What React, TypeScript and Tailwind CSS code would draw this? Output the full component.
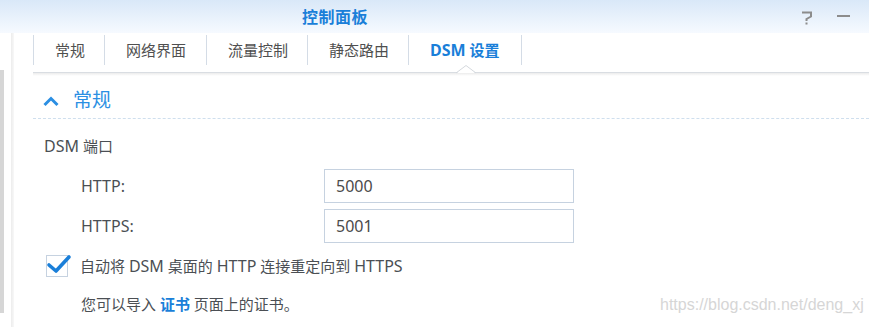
import React from "react";

const tabs = [
  { label: "常规", w: "w-[71px]" },
  { label: "网络界面", w: "w-[102px]" },
  { label: "流量控制", w: "w-[101px]" },
  { label: "静态路由", w: "w-[101px]" },
];

function L({ children }: { children: React.ReactNode }) {
  return <span className="text-[16px]">{children}</span>;
}

export default function App() {
  return (
    <div
      className="relative w-[869px] h-[327px] overflow-hidden bg-white text-[#4b4f54]"
      style={{ fontFamily: '"Noto Sans", "Noto Sans CJK SC", sans-serif' }}
    >
      {/* Header */}
      <div className="h-[33px] flex items-center bg-gradient-to-b from-[#d9e8f8] to-[#f6faff]">
        <div className="ml-[302px] text-[16px] font-semibold text-[#1a7fd9] leading-none tracking-[0.5px]">
          控制面板
        </div>
        <div className="ml-auto mr-[19px] flex items-center gap-[24px]">
          <svg width="12" height="14" viewBox="0 0 12 14" className="mt-[2px]">
            <path d="M1 1.5 H10 V5.5 L5.5 8 V10" fill="none" stroke="#8c8c8c" strokeWidth="2" />
            <rect x="4.5" y="11.5" width="2" height="2" fill="#8c8c8c" />
          </svg>
          <div className="w-[13px] h-[2px] bg-[#8c8c8c] mt-[-1px]" />
        </div>
      </div>

      <div className="flex h-[294px]">
        {/* Left strip */}
        <div className="w-[33px] flex shrink-0">
          <div className="w-[4px] pt-[37px]">
            <div className="h-[243px] bg-[#d6d6d6]" />
          </div>
          <div className="w-[7px]" />
          <div className="w-[3px] h-full bg-gradient-to-r from-[#ececec] to-[#f8f8f8]" />
        </div>

        {/* Main */}
        <div className="flex-1 flex flex-col">
          {/* Tabs */}
          <div className="relative h-[39px]">
            <div className="mt-[2px] h-[30px] flex items-stretch">
              {tabs.map((t) => (
                <div
                  key={t.label}
                  className={`${t.w} border-l border-[#d4dce6] pl-[21px] flex items-center text-[15px] text-[#4f4f4f]`}
                >
                  {t.label}
                </div>
              ))}
              <div className="w-[114px] border-l border-r border-[#d4dce6] pl-[21px] flex items-center text-[15px] font-bold text-[#1a7fd9]">
                <span className="text-[16px]">DSM</span>&nbsp;设置
              </div>
            </div>
            <div className="absolute left-0 right-0 bottom-[-1px] h-[1px] bg-[#d9dde2]" />
            <div className="absolute left-0 right-0 bottom-[-4px] h-[3px] bg-gradient-to-b from-[#ececec] to-white" />
            <svg
              width="20"
              height="10"
              viewBox="0 0 20 10"
              className="absolute left-[423px] bottom-[-2px]"
            >
              <polygon points="1,9 10,2 19,9" fill="white" />
              <polyline points="0,9 10,1.5 20,9" fill="none" stroke="#d4d8dd" strokeWidth="1" />
            </svg>
          </div>

          {/* Section header */}
          <div className="mt-[13px] h-[34px] flex items-center border-b border-dashed border-[#cfdfee]">
            <svg width="18" height="12" viewBox="0 0 18 12" className="ml-[9px] mt-[-2px]">
              <polyline points="2.5,10 9,3.5 15.5,10" fill="none" stroke="#2b8fe3" strokeWidth="3" />
            </svg>
            <div className="ml-[13px] text-[19px] text-[#2b8fe3] leading-none mt-[-2px]">常规</div>
          </div>

          {/* DSM port */}
          <div className="mt-[17px] ml-[11px] text-[15px] leading-[20px]">
            <L>DSM</L> 端口
          </div>

          <div className="mt-[13px] flex items-center h-[34px]">
            <div className="ml-[48px] w-[243px] text-[16px]">HTTP:</div>
            <div className="w-[250px] h-[34px] border border-[#c6d2e0] flex items-center pl-[11px] text-[16px] text-[#4b4b4b]">
              5000
            </div>
          </div>
          <div className="mt-[6px] flex items-center h-[34px]">
            <div className="ml-[48px] w-[243px] text-[16px]">HTTPS:</div>
            <div className="w-[250px] h-[34px] border border-[#c6d2e0] flex items-center pl-[11px] text-[16px] text-[#4b4b4b]">
              5001
            </div>
          </div>

          {/* Checkbox */}
          <div className="mt-[12px] flex items-center h-[22px]">
            <div className="relative ml-[13px] w-[22px] h-[22px] border border-[#c6d2e0] bg-white">
              <svg
                width="26"
                height="22"
                viewBox="0 0 26 22"
                className="absolute left-[-1px] top-[-3px]"
              >
                <polyline
                  points="3,12 10,18 23,4"
                  fill="none"
                  stroke="#1a7fd9"
                  strokeWidth="3.6"
                  strokeLinecap="round"
                  strokeLinejoin="round"
                />
              </svg>
            </div>
            <div className="ml-[12px] text-[15px]">
              自动将 <L>DSM</L> 桌面的 <L>HTTP</L> 连接重定向到 <L>HTTPS</L>
            </div>
          </div>

          <div className="mt-[17px] ml-[48px] text-[15px] leading-[20px]">
            您可以导入 <span className="text-[#1a7fd9] font-bold">证书</span> 页面上的证书。
          </div>
        </div>
      </div>

      {/* Watermark */}
      <div
        className="absolute left-[660px] top-[295px] text-[16px] text-[#d6d6d6] leading-[20px]"
        style={{ fontFamily: '"Liberation Sans", Arial, sans-serif' }}
      >
        https://blog.csdn.net/deng_xj
      </div>
    </div>
  );
}
